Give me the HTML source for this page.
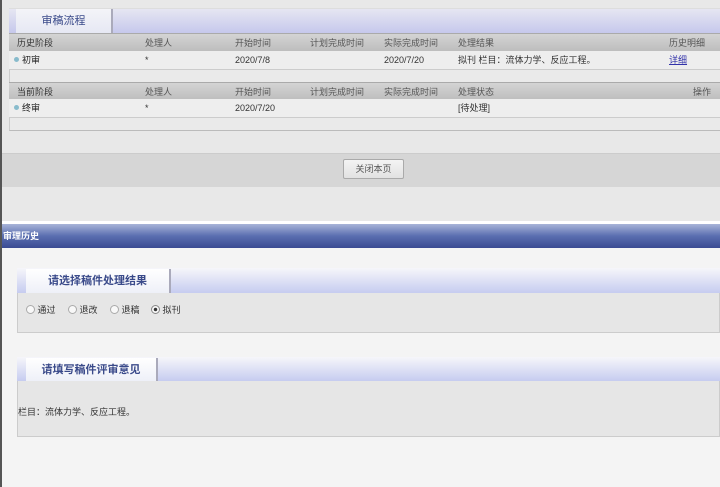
<!DOCTYPE html>
<html><head><meta charset="utf-8"><style>
*{margin:0;padding:0;box-sizing:border-box}
body{width:720px;height:487px;overflow:hidden;background:#f4f4f4;font-family:"Liberation Sans","Noto Sans CJK SC",sans-serif;font-size:9px;color:#333;position:relative}
.a{position:absolute}
.top{left:0;top:0;width:720px;height:222px;background:#e8e8e8}
.tabbar{left:9px;top:8px;width:711px;height:25px;background:linear-gradient(to bottom,#e6e6f2,#c6c8ec);border-top:1px solid #ddd}
.tab{background:linear-gradient(to bottom,#f4f4f8,#e6e8f4);border-right:2px solid #aab;color:#3a4a8a;font-size:11px;text-align:center;line-height:24px}
.hdr{left:9px;width:711px;height:18px;background:linear-gradient(to bottom,#d4d4d4,#bdbdbd);border-top:1px solid #aaa;color:#555}
.row{left:9px;width:711px;height:19px;background:#eee;border-bottom:1px solid #ccc}
.c{position:absolute;top:0;line-height:18px;white-space:nowrap}
.dot{display:inline-block;width:5px;height:5px;border-radius:50%;background:#8bc;margin-right:3px;vertical-align:1px}
.r{display:inline-block;width:9px;height:9px;border:1px solid #aaa;border-radius:50%;background:#f8f8f8;vertical-align:-1px}
.opt{position:absolute;top:0;white-space:nowrap}
</style></head><body>
<div class="a top"></div>
<div class="a" style="left:9px;top:33px;width:711px;height:98px;border-left:1px solid #ccc;border-bottom:1px solid #bbb;background:#eaeaea"></div>
<div class="a tabbar"><div class="a tab" style="left:7px;top:0;width:97px;height:24px">审稿流程</div></div>
<div class="a hdr" style="top:33px"><span class="c" style="left:8px;color:#333">历史阶段</span><span class="c" style="left:136px">处理人</span><span class="c" style="left:226px">开始时间</span><span class="c" style="left:301px">计划完成时间</span><span class="c" style="left:375px">实际完成时间</span><span class="c" style="left:449px">处理结果</span><span class="c" style="left:660px">历史明细</span></div>
<div class="a row" style="top:51px"><span class="c" style="left:5px;color:#222"><i class="dot"></i>初审</span><span class="c" style="left:136px">*</span><span class="c" style="left:226px">2020/7/8</span><span class="c" style="left:375px">2020/7/20</span><span class="c" style="left:449px">拟刊 栏目：流体力学、反应工程。</span><span class="c" style="left:660px;color:#33a;text-decoration:underline">详细</span></div>
<div class="a hdr" style="top:82px"><span class="c" style="left:8px;color:#333">当前阶段</span><span class="c" style="left:136px">处理人</span><span class="c" style="left:226px">开始时间</span><span class="c" style="left:301px">计划完成时间</span><span class="c" style="left:375px">实际完成时间</span><span class="c" style="left:449px">处理状态</span><span class="c" style="left:684px">操作</span></div>
<div class="a row" style="top:99px"><span class="c" style="left:5px;color:#222"><i class="dot"></i>终审</span><span class="c" style="left:136px">*</span><span class="c" style="left:226px">2020/7/20</span><span class="c" style="left:449px">[待处理]</span></div>
<div class="a" style="left:0;top:153px;width:720px;height:34px;background:#d6d6d6;border-top:1px solid #ccc"></div>
<div class="a" style="left:343px;top:159px;width:61px;height:20px;background:linear-gradient(#f4f4f4,#e2e2e2);border:1px solid #aaa;border-radius:2px;text-align:center;line-height:18px;color:#555">关闭本页</div>
<div class="a" style="left:0;top:221px;width:720px;height:3px;background:#fff"></div>
<div class="a" style="left:0;top:224px;width:720px;height:24px;background:linear-gradient(to bottom,#a8b4d8,#5a6eb0 50%,#3a4a92);color:#fff;font-weight:bold;line-height:24px;padding-left:3px">审理历史</div>
<div class="a" style="left:17px;top:268px;width:703px;height:65px;background:#e6e6e6;border:1px solid #ccc"></div>
<div class="a" style="left:17px;top:268px;width:703px;height:25px;background:linear-gradient(to bottom,#f6f6fa,#c6ccf0)"></div>
<div class="a tab" style="left:26px;top:269px;width:145px;height:24px;font-weight:bold;background:linear-gradient(#fff,#eef0f8)">请选择稿件处理结果</div>
<div class="a" style="left:26px;top:303px;width:200px;height:14px;line-height:14px;font-size:9px">
<span class="opt" style="left:0"><span class="r"></span> 通过</span>
<span class="opt" style="left:42px"><span class="r"></span> 退改</span>
<span class="opt" style="left:84px"><span class="r"></span> 退稿</span>
<span class="opt" style="left:125px"><span class="r" style="border-color:#888;background:radial-gradient(#333 30%,#f8f8f8 40%)"></span> 拟刊</span></div>
<div class="a" style="left:17px;top:357px;width:703px;height:80px;background:#e6e6e6;border:1px solid #ccc"></div>
<div class="a" style="left:17px;top:357px;width:703px;height:24px;background:linear-gradient(to bottom,#f6f6fa,#c6ccf0)"></div>
<div class="a tab" style="left:26px;top:358px;width:132px;height:23px;font-weight:bold;background:linear-gradient(#fff,#eef0f8)">请填写稿件评审意见</div>
<div class="a" style="left:18px;top:405px;color:#333">栏目：流体力学、反应工程。</div>
<div class="a" style="left:0;top:0;width:2px;height:487px;background:#555"></div>
</body></html>
